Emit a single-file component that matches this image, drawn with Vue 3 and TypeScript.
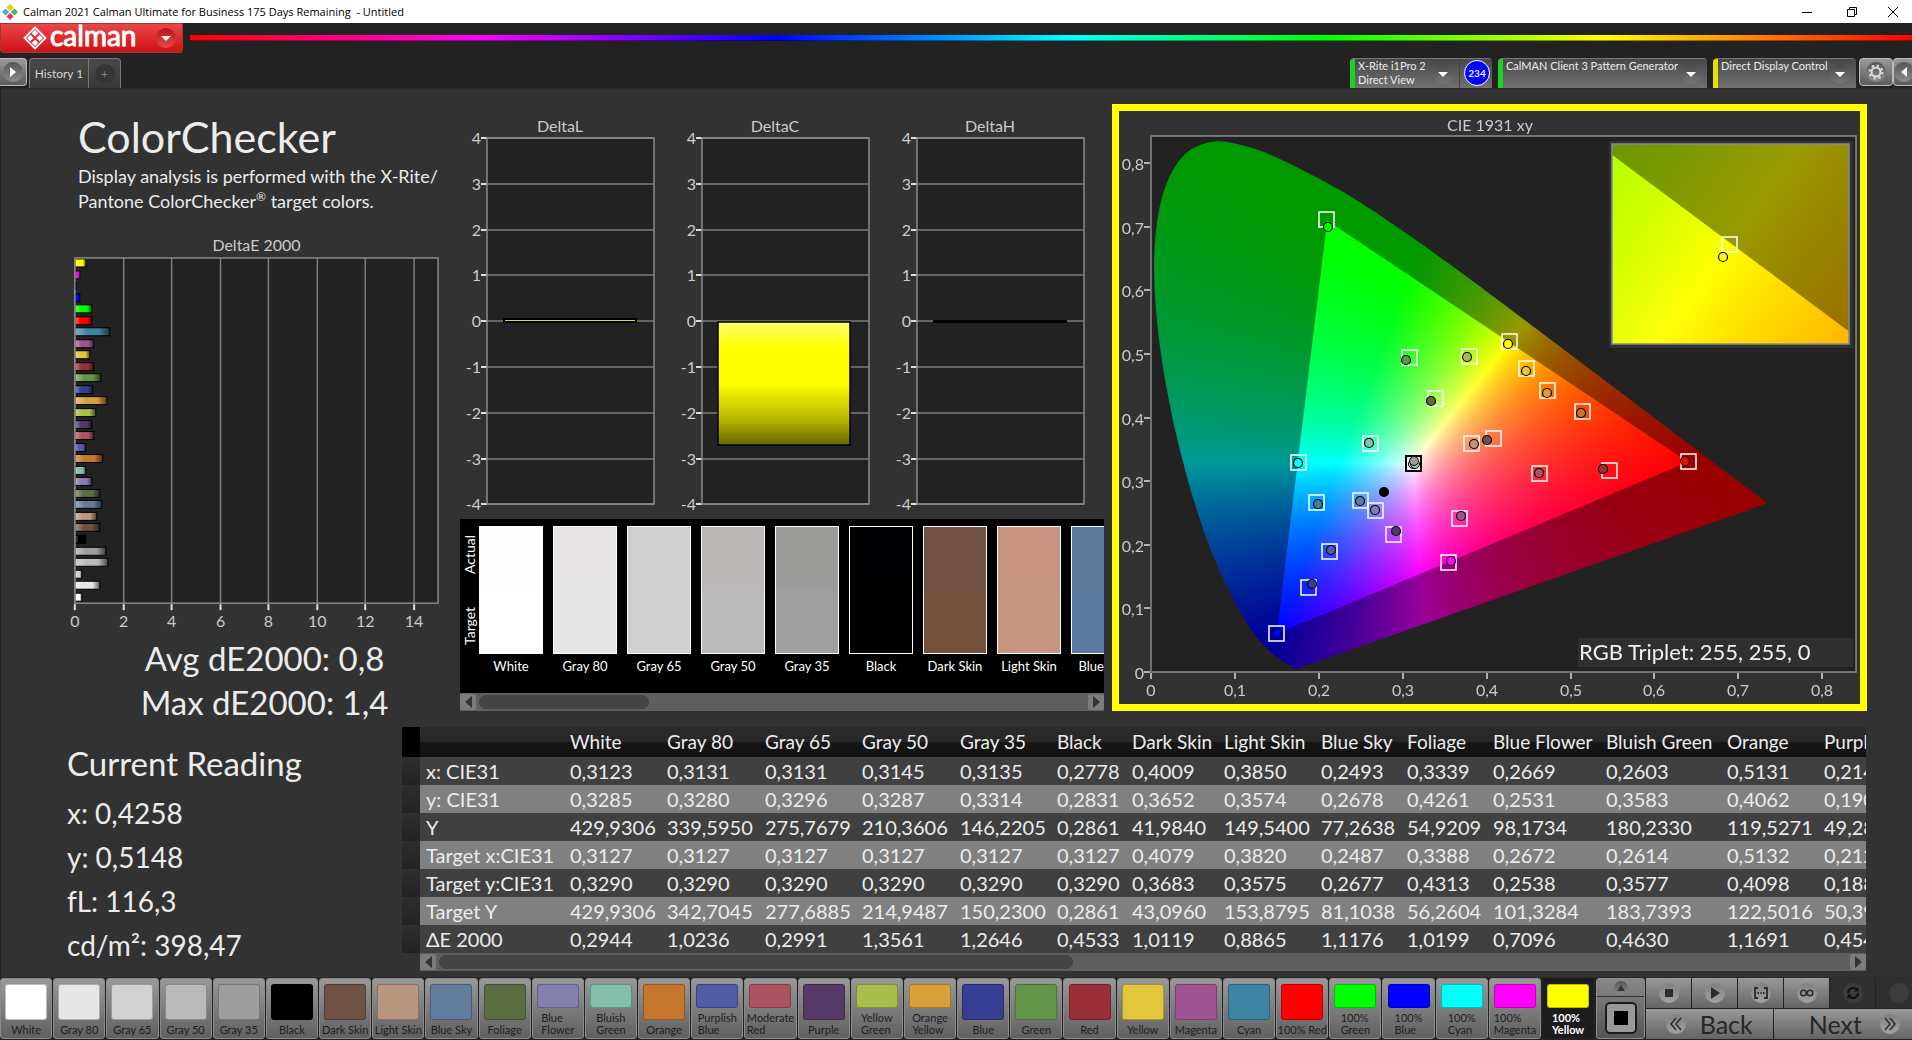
<script setup lang="ts">
import { onMounted, ref } from 'vue'

type Point = [number, number]

interface Patch {
  name: string
  color: string
  lines: string[]
  deltaE: number
  target?: Point
  measured?: Point
}

const patches: Patch[] = [
  { name: 'White', color: '#ffffff', lines: ['White'], deltaE: 0.29 },
  { name: 'Gray 80', color: '#e6e6e6', lines: ['Gray 80'], deltaE: 1.02 },
  { name: 'Gray 65', color: '#d2d2d2', lines: ['Gray 65'], deltaE: 0.3 },
  { name: 'Gray 50', color: '#bababa', lines: ['Gray 50'], deltaE: 1.36 },
  { name: 'Gray 35', color: '#9e9e9e', lines: ['Gray 35'], deltaE: 1.26 },
  { name: 'Black', color: '#000000', lines: ['Black'], deltaE: 0.45, measured: [0.2778, 0.2831] },
  { name: 'Dark Skin', color: '#6d5142', lines: ['Dark Skin'], deltaE: 1.01, target: [0.4079, 0.3683], measured: [0.4009, 0.3652] },
  { name: 'Light Skin', color: '#ba9681', lines: ['Light Skin'], deltaE: 0.89, target: [0.382, 0.3595], measured: [0.385, 0.3584] },
  { name: 'Blue Sky', color: '#627c9d', lines: ['Blue Sky'], deltaE: 1.12, target: [0.2487, 0.2697], measured: [0.2493, 0.2688] },
  { name: 'Foliage', color: '#5c6c42', lines: ['Foliage'], deltaE: 1.02, target: [0.3388, 0.4313], measured: [0.3339, 0.4261] },
  { name: 'Blue Flower', color: '#8380b0', lines: ['Blue', 'Flower'], deltaE: 0.71, target: [0.2672, 0.2548], measured: [0.2669, 0.2551] },
  { name: 'Bluish Green', color: '#84bfab', lines: ['Bluish', 'Green'], deltaE: 0.46, target: [0.2614, 0.3597], measured: [0.2603, 0.3593] },
  { name: 'Orange', color: '#c6752d', lines: ['Orange'], deltaE: 1.17, target: [0.5132, 0.4098], measured: [0.5131, 0.4072] },
  { name: 'Purplish Blue', color: '#4f5da4', lines: ['Purplish', 'Blue'], deltaE: 0.45, target: [0.2122, 0.19], measured: [0.2142, 0.1925] },
  { name: 'Moderate Red', color: '#ad5260', lines: ['Moderate', 'Red'], deltaE: 0.8, target: [0.463, 0.313], measured: [0.463, 0.3135] },
  { name: 'Purple', color: '#543b67', lines: ['Purple'], deltaE: 0.72, target: [0.2884, 0.217], measured: [0.292, 0.2217] },
  { name: 'Yellow Green', color: '#a9bd4a', lines: ['Yellow', 'Green'], deltaE: 0.85, target: [0.3787, 0.497], measured: [0.3766, 0.4945] },
  { name: 'Orange Yellow', color: '#d8a03b', lines: ['Orange', 'Yellow'], deltaE: 1.3, target: [0.472, 0.4434], measured: [0.472, 0.4387] },
  { name: 'Blue', color: '#353e91', lines: ['Blue'], deltaE: 0.73, target: [0.1877, 0.1336], measured: [0.1913, 0.1384] },
  { name: 'Green', color: '#64964b', lines: ['Green'], deltaE: 1.07, target: [0.3075, 0.495], measured: [0.304, 0.4906] },
  { name: 'Red', color: '#9b2f37', lines: ['Red'], deltaE: 0.8, target: [0.5459, 0.3176], measured: [0.5387, 0.3197] },
  { name: 'Yellow', color: '#e2c63c', lines: ['Yellow'], deltaE: 0.6, target: [0.447, 0.478], measured: [0.447, 0.4733] },
  { name: 'Magenta', color: '#a15391', lines: ['Magenta'], deltaE: 0.8, target: [0.3675, 0.2426], measured: [0.3695, 0.2453] },
  { name: 'Cyan', color: '#3f83a3', lines: ['Cyan'], deltaE: 1.45, target: [0.1967, 0.267], measured: [0.1987, 0.2642] },
  { name: '100% Red', color: '#ff0000', lines: ['100% Red'], deltaE: 0.7, target: [0.64, 0.3318], measured: [0.6365, 0.3318] },
  { name: '100% Green', color: '#00ff00', lines: ['100%', 'Green'], deltaE: 0.7, target: [0.209, 0.713], measured: [0.211, 0.6995] },
  { name: '100% Blue', color: '#0000ff', lines: ['100%', 'Blue'], deltaE: 0.2, target: [0.149, 0.0618], measured: [0.15, 0.0613] },
  { name: '100% Cyan', color: '#00ffff', lines: ['100%', 'Cyan'], deltaE: 0.05, target: [0.175, 0.3297], measured: [0.1752, 0.3291] },
  { name: '100% Magenta', color: '#ff00ff', lines: ['100%', 'Magenta'], deltaE: 0.2, target: [0.354, 0.173], measured: [0.357, 0.1753] },
  { name: '100% Yellow', color: '#ffff00', lines: ['100%', 'Yellow'], deltaE: 0.45, target: [0.4262, 0.5204], measured: [0.4258, 0.5158] },
]
const selectedPatch = '100% Yellow'
const deltaBars = [...patches].reverse()
const markers = patches.filter((p) => p.measured)

const deltaCharts = [
  { title: 'DeltaL', x: 27 },
  { title: 'DeltaC', x: 242 },
  { title: 'DeltaH', x: 457 },
]
const deltaTicks = [4, 3, 2, 1, 0, -1, -2, -3, -4]

const comparison = [
  { name: 'White', actual: '#fefefe', target: '#ffffff' },
  { name: 'Gray 80', actual: '#e6e4e4', target: '#e5e5e5' },
  { name: 'Gray 65', actual: '#d1d0d0', target: '#d1d1d1' },
  { name: 'Gray 50', actual: '#bcb8b7', target: '#bbbbbb' },
  { name: 'Gray 35', actual: '#9c9c9a', target: '#9f9f9f' },
  { name: 'Black', actual: '#010103', target: '#000000' },
  { name: 'Dark Skin', actual: '#705143', target: '#74513d' },
  { name: 'Light Skin', actual: '#c79581', target: '#c69680' },
  { name: 'Blue Sky', actual: '#5b7a9b', target: '#5a7a9f' },
]

const columns = [
  { name: 'White', width: 97 },
  { name: 'Gray 80', width: 98 },
  { name: 'Gray 65', width: 97 },
  { name: 'Gray 50', width: 98 },
  { name: 'Gray 35', width: 97 },
  { name: 'Black', width: 75 },
  { name: 'Dark Skin', width: 92 },
  { name: 'Light Skin', width: 97 },
  { name: 'Blue Sky', width: 86 },
  { name: 'Foliage', width: 86 },
  { name: 'Blue Flower', width: 113 },
  { name: 'Bluish Green', width: 121 },
  { name: 'Orange', width: 97 },
  { name: 'Purplish Blue', width: 121 },
]
const tableWidth = columns.reduce((sum, c) => sum + c.width, 18 + 144)

const rows = [
  { name: 'x: CIE31', values: ['0,3123', '0,3131', '0,3131', '0,3145', '0,3135', '0,2778', '0,4009', '0,3850', '0,2493', '0,3339', '0,2669', '0,2603', '0,5131', '0,2145'] },
  { name: 'y: CIE31', values: ['0,3285', '0,3280', '0,3296', '0,3287', '0,3314', '0,2831', '0,3652', '0,3574', '0,2678', '0,4261', '0,2531', '0,3583', '0,4062', '0,1906'] },
  { name: 'Y', values: ['429,9306', '339,5950', '275,7679', '210,3606', '146,2205', '0,2861', '41,9840', '149,5400', '77,2638', '54,9209', '98,1734', '180,2330', '119,5271', '49,2861'] },
  { name: 'Target x:CIE31', values: ['0,3127', '0,3127', '0,3127', '0,3127', '0,3127', '0,3127', '0,4079', '0,3820', '0,2487', '0,3388', '0,2672', '0,2614', '0,5132', '0,2122'] },
  { name: 'Target y:CIE31', values: ['0,3290', '0,3290', '0,3290', '0,3290', '0,3290', '0,3290', '0,3683', '0,3575', '0,2677', '0,4313', '0,2538', '0,3577', '0,4098', '0,1886'] },
  { name: 'Target Y', values: ['429,9306', '342,7045', '277,6885', '214,9487', '150,2300', '0,2861', '43,0960', '153,8795', '81,1038', '56,2604', '101,3284', '183,7393', '122,5016', '50,3941'] },
  { name: 'ΔE 2000', values: ['0,2944', '1,0236', '0,2991', '1,3561', '1,2646', '0,4533', '1,0119', '0,8865', '1,1176', '1,0199', '0,7096', '0,4630', '1,1691', '0,4547'] },
]

const readings = ['x: 0,4258', 'y: 0,5148', 'fL: 116,3', 'cd/m²: 398,47']

/* CIE 1931 diagram, in the units of its own 741 x 593 stage */
const plot = { left: 32, top: 25, right: 737, bottom: 561, sx: 839, sy: 636 }
const inset = { x: 493, y: 33, w: 237, h: 200, cx: 0.427, cy: 0.518, span: 0.05 }
const xTicks = [0, 1, 2, 3, 4, 5, 6, 7, 8]
const px = (x: number) => Math.round(plot.left + x * plot.sx)
const py = (y: number) => Math.round(plot.bottom - y * plot.sy)
const tickLabel = (n: number) => (n === 0 ? '0' : `0,${n}`)

const gamut: Point[] = [[0.64, 0.33], [0.21, 0.71], [0.15, 0.06]]
const locus: Point[] = [
  [0.1741, 0.005], [0.1733, 0.0048], [0.1714, 0.0051], [0.1689, 0.0069], [0.1644, 0.0109],
  [0.1566, 0.0177], [0.144, 0.0297], [0.1241, 0.0578], [0.1096, 0.0868], [0.0913, 0.1327],
  [0.0687, 0.2007], [0.0454, 0.295], [0.0235, 0.4127], [0.0082, 0.5384], [0.0039, 0.6548],
  [0.0139, 0.7502], [0.0389, 0.812], [0.0743, 0.8338], [0.1142, 0.8262], [0.1547, 0.8059],
  [0.2296, 0.7543], [0.3016, 0.6923], [0.3731, 0.6245], [0.4441, 0.5547], [0.5125, 0.4866],
  [0.5752, 0.4242], [0.627, 0.3725], [0.6658, 0.334], [0.6915, 0.3083], [0.719, 0.2809],
  [0.7347, 0.2653],
]

const diagram = ref<HTMLCanvasElement | null>(null)

function chromaColor(x: number, y: number): [number, number, number] {
  const safeY = Math.max(y, 0.001)
  const X = x / safeY
  const Z = (1 - x - y) / safeY
  const r = Math.max(0, 3.2406 * X - 1.5372 - 0.4986 * Z)
  const g = Math.max(0, -0.9689 * X + 1.8758 + 0.0415 * Z)
  const b = Math.max(0, 0.0557 * X - 0.204 + 1.057 * Z)
  const peak = Math.max(r, g, b, 0.0001)
  return [(r / peak) * 255, (g / peak) * 255, (b / peak) * 255]
}

function field(w: number, h: number, level: number, toXy: (i: number, j: number) => Point) {
  const layer = document.createElement('canvas')
  layer.width = w
  layer.height = h
  const context = layer.getContext('2d')!
  const image = context.createImageData(w, h)
  for (let j = 0; j < h; j++) {
    for (let i = 0; i < w; i++) {
      const [x, y] = toXy(i + 0.5, j + 0.5)
      const [r, g, b] = chromaColor(x, y)
      const at = (j * w + i) * 4
      image.data[at] = r * level
      image.data[at + 1] = g * level
      image.data[at + 2] = b * level
      image.data[at + 3] = 255
    }
  }
  context.putImageData(image, 0, 0)
  return layer
}

function smooth(points: Point[]): Point[] {
  const out: Point[] = []
  for (let k = 0; k < points.length - 1; k++) {
    const a = points[Math.max(0, k - 1)]
    const b = points[k]
    const c = points[k + 1]
    const d = points[Math.min(points.length - 1, k + 2)]
    for (let s = 0; s < 8; s++) {
      const t = s / 8
      const blend = (n: 0 | 1) =>
        0.5 * (2 * b[n] + (c[n] - a[n]) * t + (2 * a[n] - 5 * b[n] + 4 * c[n] - d[n]) * t * t + (3 * b[n] - a[n] - 3 * c[n] + d[n]) * t * t * t)
      out.push([blend(0), blend(1)])
    }
  }
  out.push(points[points.length - 1])
  return out
}

onMounted(() => {
  const canvas = diagram.value
  const context = canvas?.getContext('2d')
  if (!context) return

  const clipped = (points: Point[], draw: () => void) => {
    context.save()
    context.beginPath()
    points.forEach(([x, y], k) => (k ? context.lineTo(x, y) : context.moveTo(x, y)))
    context.closePath()
    context.clip()
    draw()
    context.restore()
  }

  const w = plot.right - plot.left
  const h = plot.bottom - plot.top
  const toMain = ([x, y]: Point): Point => [plot.left + x * plot.sx, plot.bottom - y * plot.sy]
  const mainXy = (i: number, j: number): Point => [i / plot.sx, (h - j) / plot.sy]
  context.fillStyle = '#222222'
  context.fillRect(plot.left, plot.top, w, h)
  clipped(smooth(locus).map(toMain), () => context.drawImage(field(w, h, 0.6, mainXy), plot.left, plot.top))
  clipped(gamut.map(toMain), () => context.drawImage(field(w, h, 1, mainXy), plot.left, plot.top))

  const x0 = inset.cx - inset.span / 2
  const y1 = inset.cy + inset.span / 2
  const toInset = ([x, y]: Point): Point => [
    inset.x + ((x - x0) / inset.span) * inset.w,
    inset.y + ((y1 - y) / inset.span) * inset.h,
  ]
  const insetXy = (i: number, j: number): Point => [x0 + (i / inset.w) * inset.span, y1 - (j / inset.h) * inset.span]
  context.fillStyle = '#323232'
  context.fillRect(inset.x - 3, inset.y - 3, inset.w + 7, inset.h + 7)
  context.drawImage(field(inset.w, inset.h, 0.6, insetXy), inset.x, inset.y)
  context.save()
  context.beginPath()
  context.rect(inset.x, inset.y, inset.w, inset.h)
  context.clip()
  clipped(gamut.map(toInset), () => context.drawImage(field(inset.w, inset.h, 1, insetXy), inset.x, inset.y))
  context.restore()
})
</script>

<template>
  <div class="app">
    <header class="titlebar">
      <svg class="app-icon" width="16" height="16" viewBox="0 0 16 16" aria-hidden="true">
        <path d="M8 0l3.600 3.600L8 7.200 4.400 3.600z" fill="#f2c31b" />
        <path d="M3.600 4.400L7.200 8l-3.600 3.600L0 8z" fill="#38b3e8" />
        <path d="M12.400 4.400L16 8l-3.600 3.600L8.800 8z" fill="#3cc04a" />
        <path d="M8 8.800l3.600 3.600L8 16l-3.600-3.600z" fill="#e5336c" />
      </svg>
      <span class="window-title">Calman 2021 Calman Ultimate for Business 175 Days Remaining&nbsp; - Untitled</span>
      <div class="window-buttons">
        <button type="button" aria-label="Minimize">
          <svg width="12" height="12" viewBox="0 0 12 12"><path d="M1 6.500h10" stroke="#000" fill="none" /></svg>
        </button>
        <button type="button" aria-label="Restore">
          <svg width="12" height="12" viewBox="0 0 12 12"><path d="M1.500 3.500h7v7h-7zM3.500 3.500v-2h7v7h-2" stroke="#000" fill="none" /></svg>
        </button>
        <button type="button" aria-label="Close">
          <svg width="12" height="12" viewBox="0 0 12 12"><path d="M1 1l10 10M11 1L1 11" stroke="#000" fill="none" /></svg>
        </button>
      </div>
    </header>

    <div class="brandbar">
      <button type="button" class="brand" aria-label="calman menu">
        <svg width="24" height="24" viewBox="0 0 24 24" aria-hidden="true">
          <path d="M12 1.500L22.500 12 12 22.500 1.500 12z" fill="none" stroke="#fff" stroke-width="1.800" />
          <path d="M12 4l3.300 3.300L12 10.600 8.700 7.300zM7.300 8.700l3.300 3.300-3.300 3.300L4 12zM16.700 8.700L20 12l-3.300 3.300-3.300-3.300zM12 13.400l3.300 3.300L12 20l-3.300-3.300z" fill="#fff" />
        </svg>
        <span class="brand-name">calman</span>
        <span class="brand-drop"><i class="caret"></i></span>
      </button>
      <div class="rainbow"></div>
    </div>

    <nav class="tabs">
      <button type="button" class="side-toggle" aria-label="Expand left panel">
        <span class="round"><svg width="8" height="12" viewBox="0 0 8 12"><path d="M1 1l6 5-6 5z" fill="#fff" /></svg></span>
      </button>
      <div class="tab-group">
        <button type="button" class="tab">History 1</button>
        <button type="button" class="tab add" aria-label="Add history"><span>+</span></button>
      </div>
      <div class="devices">
        <div class="device meter">
          <span class="stripe"></span>
          <p>X-Rite i1Pro 2<br />Direct View</p>
          <button type="button" class="drop" aria-label="Meter menu"><i class="caret"></i></button>
          <div class="badge-slot"><span class="badge">234</span></div>
        </div>
        <div class="device source">
          <span class="stripe"></span>
          <p>CalMAN Client 3 Pattern Generator</p>
          <button type="button" class="drop" aria-label="Source menu"><i class="caret"></i></button>
        </div>
        <div class="device display">
          <span class="stripe yellow"></span>
          <p>Direct Display Control</p>
          <button type="button" class="drop" aria-label="Display menu"><i class="caret"></i></button>
        </div>
        <button type="button" class="side-toggle gear" aria-label="Settings">
          <span class="round">
            <svg width="16" height="16" viewBox="0 0 16 16">
              <circle cx="8" cy="8" r="4.500" fill="none" stroke="#ddd" stroke-width="2" />
              <circle cx="8" cy="8" r="6.500" fill="none" stroke="#ddd" stroke-width="2" stroke-dasharray="2.300 2.800" />
            </svg>
          </span>
        </button>
        <button type="button" class="side-toggle right" aria-label="Expand right panel">
          <span class="round"><svg width="8" height="12" viewBox="0 0 8 12"><path d="M7 1L1 6l6 5z" fill="#fff" /></svg></span>
        </button>
      </div>
    </nav>

    <main class="workspace">
      <div class="top">
        <section class="summary">
          <h1>ColorChecker</h1>
          <p class="lead">Display analysis is performed with the X-Rite/<br />Pantone ColorChecker<sup>®</sup> target colors.</p>
          <svg class="chart" viewBox="0 0 460 404" role="img" aria-label="DeltaE 2000">
            <defs>
              <linearGradient id="shade" x1="0" x2="1" y1="0" y2="0">
                <stop offset="0" stop-color="#fff" stop-opacity="0.400" />
                <stop offset="0.350" stop-color="#fff" stop-opacity="0" />
                <stop offset="0.700" stop-color="#000" stop-opacity="0" />
                <stop offset="1" stop-color="#000" stop-opacity="0.600" />
              </linearGradient>
            </defs>
            <text x="256" y="18" text-anchor="middle">DeltaE 2000</text>
            <rect x="74" y="25" width="364" height="346" fill="#222" />
            <g v-for="n in 8" :key="n">
              <path :d="`M${Math.round(74 + (n - 1) * 48.500)} 25v346`" stroke="#7d7d7d" stroke-width="1.500" />
              <path :d="`M${Math.round(74 + (n - 1) * 48.500)} 372v6`" stroke="#ddd" stroke-width="2" />
              <text :x="Math.round(74 + (n - 1) * 48.500)" y="395" text-anchor="middle">{{ (n - 1) * 2 }}</text>
            </g>
            <g v-for="(bar, i) in deltaBars" :key="bar.name">
              <rect x="74" :y="Math.round(26 + i * 11.540)" :width="Math.round(bar.deltaE * 24.300)" height="8" :fill="bar.color" />
              <rect x="74" :y="Math.round(26 + i * 11.540)" :width="Math.round(bar.deltaE * 24.300)" height="8" fill="url(#shade)" stroke="#000" />
            </g>
            <rect x="74" y="25" width="364" height="346" fill="none" stroke="#8a8a8a" stroke-width="1.500" />
          </svg>
          <p class="stat">Avg dE2000: 0,8</p>
          <p class="stat">Max dE2000: 1,4</p>
        </section>

        <section class="middle">
          <svg class="chart" viewBox="0 0 644 415" role="img" aria-label="Delta L, C and H">
            <defs>
              <linearGradient id="yellow-bar" x1="0" x2="0" y1="0" y2="1">
                <stop offset="0" stop-color="#ffff66" />
                <stop offset="0.220" stop-color="#ffff00" />
                <stop offset="0.500" stop-color="#ffff00" />
                <stop offset="0.800" stop-color="#b4b400" />
                <stop offset="1" stop-color="#666600" />
              </linearGradient>
            </defs>
            <g v-for="chart in deltaCharts" :key="chart.title">
              <text :x="chart.x + 73" y="28" text-anchor="middle">{{ chart.title }}</text>
              <rect :x="chart.x" y="34" width="167" height="366" fill="#222" />
              <g v-for="(tick, i) in deltaTicks" :key="tick">
                <path :d="`M${chart.x} ${Math.round(34 + i * 45.800)}h167`" stroke="#7d7d7d" stroke-width="1.500" />
                <path :d="`M${chart.x - 6} ${Math.round(34 + i * 45.800)}h6`" stroke="#ddd" stroke-width="2" />
                <text :x="chart.x - 6" :y="Math.round(40 + i * 45.800)" text-anchor="end">{{ tick }}</text>
              </g>
              <rect :x="chart.x" y="34" width="167" height="366" fill="none" stroke="#8a8a8a" stroke-width="1.500" />
            </g>
            <rect x="44" y="215" width="132" height="3" fill="#d8d84a" stroke="#000" stroke-width="2" />
            <rect x="258" y="218" width="132" height="123" fill="url(#yellow-bar)" stroke="#000" stroke-width="1.500" />
            <rect x="473" y="216" width="134" height="3" fill="#000" />
          </svg>

          <div class="swatches">
            <div class="swatch-axis"><span>Actual</span><span>Target</span></div>
            <div class="swatch-track">
              <figure v-for="item in comparison" :key="item.name">
                <div class="swatch">
                  <span :style="{ background: item.actual }"></span>
                  <span :style="{ background: item.target }"></span>
                </div>
                <figcaption>{{ item.name }}</figcaption>
              </figure>
            </div>
          </div>
          <div class="scrollbar">
            <button type="button" aria-label="Scroll left"><svg width="7" height="12" viewBox="0 0 7 12"><path d="M7 0v12L0 6z" fill="#333" /></svg></button>
            <div class="rail"><span class="thumb short"></span></div>
            <button type="button" aria-label="Scroll right"><svg width="7" height="12" viewBox="0 0 7 12"><path d="M0 0v12l7-6z" fill="#333" /></svg></button>
          </div>
        </section>

        <section class="cie">
          <canvas ref="diagram" width="741" height="593"></canvas>
          <svg class="chart" viewBox="0 0 741 593" role="img" aria-label="CIE 1931 xy">
            <text x="371" y="20" text-anchor="middle">CIE 1931 xy</text>
            <rect :x="plot.left" :y="plot.top" :width="plot.right - plot.left" :height="plot.bottom - plot.top" fill="none" stroke="#8a8a8a" stroke-width="1.500" />
            <g v-for="n in xTicks" :key="n">
              <path :d="`M${px(n / 10)} 562v6`" stroke="#ddd" stroke-width="1.500" />
              <text :x="px(n / 10)" y="585" text-anchor="middle">{{ tickLabel(n) }}</text>
              <path :d="`M25 ${py(n / 10)}h6`" stroke="#ddd" stroke-width="1.500" />
              <text x="25" :y="py(n / 10) + 7" text-anchor="end">{{ tickLabel(n) }}</text>
            </g>
            <g v-for="m in markers" :key="m.name">
              <rect v-if="m.target" :x="px(m.target[0]) - 7" :y="py(m.target[1]) - 7" width="15" height="15" fill="none" stroke="#fff" stroke-width="1.500" />
            </g>
            <g v-for="m in markers" :key="m.name">
              <circle v-if="m.measured" :cx="px(m.measured[0])" :cy="py(m.measured[1])" r="4.500" :fill="m.color" stroke="#000" stroke-width="1.200" />
            </g>
            <rect x="287" y="345" width="15" height="15" fill="none" stroke="#000" stroke-width="2" />
            <rect x="289" y="347" width="11" height="11" fill="none" stroke="#fff" />
            <circle cx="294" cy="353" r="4.500" fill="#ddd" stroke="#000" />
            <circle cx="296" cy="353" r="4.500" fill="#bbb" stroke="#000" />
            <circle cx="295" cy="350" r="4.500" fill="#9e9e9e" stroke="#000" />
            <rect :x="inset.x" :y="inset.y" :width="inset.w" :height="inset.h" fill="none" stroke="#8a8a8a" stroke-width="1.500" />
            <rect x="603" y="126" width="15" height="15" fill="none" stroke="#fff" stroke-width="1.500" />
            <circle cx="604" cy="146" r="4.500" fill="#ffff00" stroke="#000" stroke-width="1.200" />
            <rect x="459" y="527" width="275" height="29" fill="#2f2f2f" />
            <text class="triplet" x="460" y="549">RGB Triplet: 255, 255, 0</text>
          </svg>
        </section>
      </div>

      <div class="bottom">
        <section class="reading">
          <h2>Current Reading</h2>
          <p v-for="line in readings" :key="line">{{ line }}</p>
        </section>
        <section class="data">
          <div class="table-view">
            <table :style="{ width: tableWidth + 'px' }">
              <colgroup>
                <col class="gutter-col" />
                <col class="label-col" />
                <col v-for="c in columns" :key="c.name" :style="{ width: c.width + 'px' }" />
              </colgroup>
              <thead>
                <tr>
                  <td class="gutter"></td>
                  <td></td>
                  <th v-for="c in columns" :key="c.name" scope="col">{{ c.name }}</th>
                </tr>
              </thead>
              <tbody>
                <tr v-for="row in rows" :key="row.name">
                  <td class="gutter"></td>
                  <th scope="row">{{ row.name }}</th>
                  <td v-for="(value, i) in row.values" :key="i">{{ value }}</td>
                </tr>
              </tbody>
            </table>
          </div>
          <div class="scrollbar indented">
            <button type="button" aria-label="Scroll table left"><svg width="7" height="12" viewBox="0 0 7 12"><path d="M7 0v12L0 6z" fill="#333" /></svg></button>
            <div class="rail"><span class="thumb long"></span></div>
            <button type="button" aria-label="Scroll table right"><svg width="7" height="12" viewBox="0 0 7 12"><path d="M0 0v12l7-6z" fill="#333" /></svg></button>
          </div>
        </section>
      </div>
    </main>

    <footer class="dock">
      <div class="patches">
        <button v-for="patch in patches" :key="patch.name" type="button" class="patch" :class="{ selected: patch.name === selectedPatch }">
          <span class="chip" :style="{ background: patch.color }"></span>
          <span class="patch-name"><template v-for="(line, i) in patch.lines" :key="line"><br v-if="i" />{{ line }}</template></span>
        </button>
      </div>
      <div class="window-control">
        <button type="button" class="up" aria-label="Show pattern window">
          <span class="round small"><svg width="8" height="6" viewBox="0 0 8 6"><path d="M4 0l4 6H0z" fill="#333" /></svg></span>
        </button>
        <button type="button" class="pattern" aria-label="Pattern window"><span></span></button>
      </div>
      <div class="controls">
        <div class="transport">
          <button type="button" aria-label="Stop"><span class="round"><svg width="10" height="10" viewBox="0 0 10 10"><path d="M1 1h8v8H1z" fill="#2c2c2c" /></svg></span></button>
          <button type="button" aria-label="Play"><span class="round"><svg width="10" height="12" viewBox="0 0 10 12"><path d="M1 0l9 6-9 6z" fill="#2c2c2c" /></svg></span></button>
          <button type="button" aria-label="Read series"><span class="round"><svg width="16" height="12" viewBox="0 0 16 12"><path d="M5 1H2v10h3M11 1h3v10h-3" stroke="#2c2c2c" stroke-width="1.800" fill="none" /><path d="M4.500 6h1.500M7.300 6h1.500M10 6h1.500" stroke="#2c2c2c" stroke-width="1.800" /></svg></span></button>
          <button type="button" aria-label="Read continuously"><span class="round"><svg width="16" height="10" viewBox="0 0 16 10"><circle cx="4.500" cy="5" r="2.800" fill="none" stroke="#2c2c2c" stroke-width="1.500" /><circle cx="11" cy="5" r="2.800" fill="none" stroke="#2c2c2c" stroke-width="1.500" /></svg></span></button>
          <button type="button" class="off" aria-label="Refresh"><span class="round"><svg width="14" height="14" viewBox="0 0 14 14"><path d="M2 7a5 5 0 0 1 8.500-3.500M12 7a5 5 0 0 1-8.500 3.500" stroke="#111" stroke-width="2" fill="none" /><path d="M12.500 1v4.500H8zM1.500 13V8.500H6z" fill="#111" /></svg></span></button>
          <button type="button" class="off" aria-label="Record"><span class="round"></span></button>
        </div>
        <div class="steps">
          <button type="button"><span class="round"><svg width="14" height="14" viewBox="0 0 14 14"><path d="M7 1L2 7l5 6M12 1L7 7l5 6" stroke="#2c2c2c" stroke-width="1.500" fill="none" /></svg></span>Back</button>
          <button type="button" class="next">Next<span class="round"><svg width="14" height="14" viewBox="0 0 14 14"><path d="M2 1l5 6-5 6M7 1l5 6-5 6" stroke="#2c2c2c" stroke-width="1.500" fill="none" /></svg></span></button>
        </div>
      </div>
    </footer>
  </div>
</template>

<style>
body {
  background: #323232;
}
</style>

<style scoped>
* {
  box-sizing: border-box;
}
.app {
  display: flex;
  flex-direction: column;
  min-height: 100vh;
  overflow: hidden;
  background: #323232;
  color: #ececec;
  font-family: Lato, "Open Sans", sans-serif;
}
button {
  margin: 0;
  padding: 0;
  border: 0;
  background: none;
  color: inherit;
  font: inherit;
}
p,
h1,
h2,
figure {
  margin: 0;
  font-weight: 400;
}
svg,
canvas {
  display: block;
}

.titlebar {
  display: flex;
  align-items: center;
  height: 23px;
  padding-left: 2px;
  background: #fff;
  color: #000;
  font: 11px/23px "Open Sans", sans-serif;
}
.window-title {
  margin-left: 5px;
}
.window-buttons {
  display: flex;
  margin-left: auto;
}
.window-buttons button {
  display: grid;
  place-items: center;
  width: 45px;
  height: 20px;
}
.window-buttons button:last-child {
  width: 38px;
}

.brandbar {
  display: flex;
  align-items: flex-start;
  height: 35px;
  background: #222;
}
.brand {
  display: flex;
  align-items: center;
  width: 183px;
  height: 30px;
  padding-left: 22px;
  border: 1px solid #a33;
  border-radius: 0 0 3px 3px;
  background: linear-gradient(#e84848, #e02a2e 50%, #cb1418);
  color: #fff;
}
.brand-name {
  margin: -6px 0 0 3px;
  font-size: 28px;
  line-height: 28px;
  -webkit-text-stroke: 1px #fff;
}
.brand-drop {
  display: grid;
  place-items: center;
  width: 20px;
  height: 20px;
  margin-left: auto;
  margin-right: 6px;
  border-radius: 50%;
  background: linear-gradient(#b51519, #e04a4a);
}
.caret {
  width: 0;
  height: 0;
  border: 5px solid transparent;
  border-top-color: #fff;
  border-bottom: 0;
}
.rainbow {
  flex: 1;
  height: 6px;
  margin: 12px 0 0 7px;
  background: linear-gradient(90deg, #f00, #f0f 17%, #00f 34%, #0ff 51%, #0f0 66%, #ff0 82%, #f00);
  border-bottom: 1px solid rgb(0 0 0 / 40%);
}

.tabs {
  display: flex;
  align-items: flex-start;
  height: 30px;
  background: #222;
}
.side-toggle {
  display: grid;
  place-items: center;
  width: 27px;
  height: 28px;
  border: 1px solid #bbb;
  border-left: 0;
  border-radius: 0 4px 4px 0;
  background: linear-gradient(#999, #5c5c5c);
}
.round {
  display: grid;
  place-items: center;
  width: 20px;
  height: 20px;
  border-radius: 50%;
  background: linear-gradient(#555, #8c8c8c);
}
.tab-group {
  display: flex;
  height: 30px;
  margin-left: 2px;
  border: 1px solid #777;
  border-bottom: 0;
  border-radius: 4px 4px 0 0;
  background: linear-gradient(#4a4a4a, #383838);
}
.tab {
  width: 58px;
  color: #d4d4d4;
  font-size: 12px;
}
.tab.add {
  display: grid;
  place-items: center;
  width: 32px;
  border-left: 1px solid #777;
  color: #888;
}
.tab.add span {
  width: 20px;
  height: 20px;
  border-radius: 50%;
  background: #363636;
  line-height: 19px;
}
.devices {
  display: flex;
  margin-left: auto;
}
.device {
  display: flex;
  height: 30px;
  margin-right: 6px;
  overflow: hidden;
  border-top: 1px solid #777;
  border-radius: 4px 4px 0 0;
  background: linear-gradient(#484848, #707070);
}
.device p {
  flex: 1;
  padding-left: 3px;
  font-size: 11px;
  line-height: 14px;
  white-space: nowrap;
}
.stripe {
  width: 5px;
  background: #1bd41b;
}
.stripe.yellow {
  background: #e8e000;
}
.meter {
  width: 142px;
}
.source {
  width: 209px;
}
.display {
  width: 143px;
  margin-right: 3px;
}
.drop {
  display: grid;
  place-items: center;
  flex: none;
  width: 20px;
  height: 20px;
  margin: 5px 6px 0 0;
  border-radius: 50%;
  background: linear-gradient(#484848, #777);
}
.badge-slot {
  flex: none;
  padding: 1px 2px 0 4px;
  border-left: 1px solid #444;
}
.badge {
  display: block;
  width: 26px;
  height: 26px;
  border: 1px solid #fff;
  border-radius: 50%;
  background: #00f;
  font-size: 10px;
  font-weight: 700;
  line-height: 24px;
  text-align: center;
}
.gear {
  width: 34px;
  border-left: 1px solid #bbb;
  border-radius: 4px;
}
.side-toggle.right {
  width: 19px;
  border: 1px solid #bbb;
  border-right: 0;
  border-radius: 4px 0 0 4px;
}

.workspace {
  display: flex;
  flex: 1;
  flex-direction: column;
  border-top: 1px solid #2a2a2a;
  border-left: 1px solid #222;
}
.top {
  display: grid;
  grid-template-columns: minmax(0, 459fr) minmax(0, 644fr) minmax(0, 763fr);
  align-items: start;
  padding-right: 45px;
}
h1 {
  margin: 24px 0 0 77px;
  font-size: 43px;
  line-height: 48px;
  white-space: nowrap;
}
.lead {
  margin: 3px 0 19px 77px;
  font-size: 18px;
  line-height: 25px;
  white-space: nowrap;
}
sup {
  font-size: 12px;
  line-height: 1;
}
.chart {
  width: 100%;
  height: auto;
}
.chart text {
  fill: #cbcbcb;
  font-size: 16px;
}
.stat {
  margin-left: 68px;
  font-size: 33px;
  line-height: 44px;
  text-align: center;
}
.middle {
  padding-top: 15px;
}
.swatches {
  display: flex;
  height: 174px;
  overflow: hidden;
  background: #000;
  color: #fff;
}
.swatch-axis {
  display: flex;
  flex: none;
  flex-direction: row-reverse;
  justify-content: space-around;
  width: 19px;
  height: 142px;
  font-size: 14px;
  line-height: 19px;
  writing-mode: vertical-rl;
  transform: rotate(180deg);
}
.swatch-track {
  display: flex;
  gap: 10px;
  padding-top: 7px;
}
figure {
  flex: none;
  width: 64px;
  text-align: center;
}
.swatch {
  display: flex;
  flex-direction: column;
  height: 128px;
  border: 1px solid #fff;
}
.swatch span {
  flex: 1;
}
figcaption {
  font-size: 13px;
  line-height: 24px;
  white-space: nowrap;
}
.scrollbar {
  display: flex;
  align-items: center;
  height: 18px;
  background: #5f5f5f;
}
.scrollbar button {
  display: grid;
  place-items: center;
  flex: none;
  width: 16px;
  height: 16px;
  border-radius: 2px;
  background: #7c7c7c;
}
.rail {
  flex: 1;
  padding: 0 3px;
}
.thumb {
  display: block;
  height: 14px;
  border-radius: 7px;
  background: #444;
}
.thumb.short {
  width: 28%;
}
.thumb.long {
  width: 45%;
}
.scrollbar.indented {
  margin-left: 18px;
}
.cie {
  display: grid;
  margin: 15px 0 0 8px;
  border: 7px solid #ff0;
}
.cie > * {
  grid-area: 1 / 1;
  width: 100%;
}
.chart .triplet {
  fill: #f0f0f0;
  font-size: 22px;
}

.bottom {
  display: flex;
  margin-top: 3px;
  padding-right: 46px;
}
.reading {
  flex: none;
  width: 401px;
  padding: 16px 0 0 66px;
}
h2 {
  margin-bottom: 8px;
  font-size: 33px;
  line-height: 40px;
}
.reading p {
  font-size: 28px;
  line-height: 44px;
}
.data {
  flex: 1;
  min-width: 0;
}
.table-view {
  overflow: hidden;
}
table {
  border-collapse: collapse;
  table-layout: fixed;
  font-size: 20px;
}
.gutter-col {
  width: 18px;
}
.label-col {
  width: 144px;
}
th,
td {
  height: 28px;
  padding: 0 0 0 6px;
  font-weight: 400;
  line-height: 28px;
  text-align: left;
  white-space: nowrap;
}
thead tr {
  background: linear-gradient(#2c2c2c, #272727 49%, #161616 51%, #121212);
}
thead th,
thead td {
  height: 30px;
  font-size: 19px;
}
thead .gutter {
  background: #000;
}
tbody tr {
  background: #404040;
}
tbody tr:nth-child(even) {
  background: #808080;
}
tbody .gutter {
  background: linear-gradient(#2e2e2e, #222);
}

.dock {
  display: flex;
  height: 63px;
  background: #222;
  border-top: 1px solid #2a2a2a;
}
.patches {
  display: flex;
  flex: 1;
  gap: 1px;
  min-width: 0;
}
.patch {
  display: flex;
  flex: 1 1 0;
  flex-direction: column;
  align-items: center;
  justify-content: space-between;
  min-width: 0;
  height: 61px;
  padding: 5px 0 2px;
  border: 1px solid #8a8a8a;
  border-radius: 3px;
  background: linear-gradient(#999, #606060);
  color: #1e1e1e;
  font-size: 11px;
  line-height: 12px;
}
.patch-name {
  text-align: left;
  white-space: nowrap;
}
.chip {
  flex: 1;
  width: 42px;
  margin-bottom: 4px;
  border: 1px solid rgb(0 0 0 / 25%);
  border-radius: 3px;
}
.patch.selected {
  border-color: #222;
  background: #1c1c1c;
  color: #fff;
  font-weight: 700;
}
.window-control {
  display: flex;
  flex-direction: column;
  width: 49px;
  height: 61px;
  margin: 0 1px 0 2px;
  border: 1px solid #8a8a8a;
  border-radius: 3px;
  background: linear-gradient(#888, #555);
}
.up {
  display: grid;
  place-items: center;
  height: 18px;
  border-bottom: 1px solid #333;
}
.round.small {
  width: 14px;
  height: 14px;
}
.pattern {
  display: grid;
  place-items: center;
  width: 32px;
  height: 32px;
  margin: 5px auto 0;
  border: 2px solid #1c1c1c;
  border-radius: 5px;
  background: #999;
}
.pattern span {
  width: 14px;
  height: 14px;
  background: #000;
}
.controls {
  flex: none;
  width: 266px;
  overflow: hidden;
}
.transport,
.steps {
  display: flex;
  gap: 1px;
  height: 30px;
}
.steps {
  margin-top: 1px;
}
.transport button,
.steps button {
  display: flex;
  flex: 1;
  align-items: center;
  justify-content: center;
  background: linear-gradient(#999, #646464);
}
.transport button {
  flex: 0 0 45px;
}
.controls .round {
  background: linear-gradient(#808080, #a2a2a2);
}
.transport .off {
  background: #303030;
}
.transport .off .round {
  background: #3c3c3c;
}
.steps button {
  gap: 14px;
  color: #262626;
  font-size: 25px;
  line-height: 28px;
}
.steps .next {
  justify-content: flex-end;
  gap: 18px;
  padding-right: 12px;
}
</style>
